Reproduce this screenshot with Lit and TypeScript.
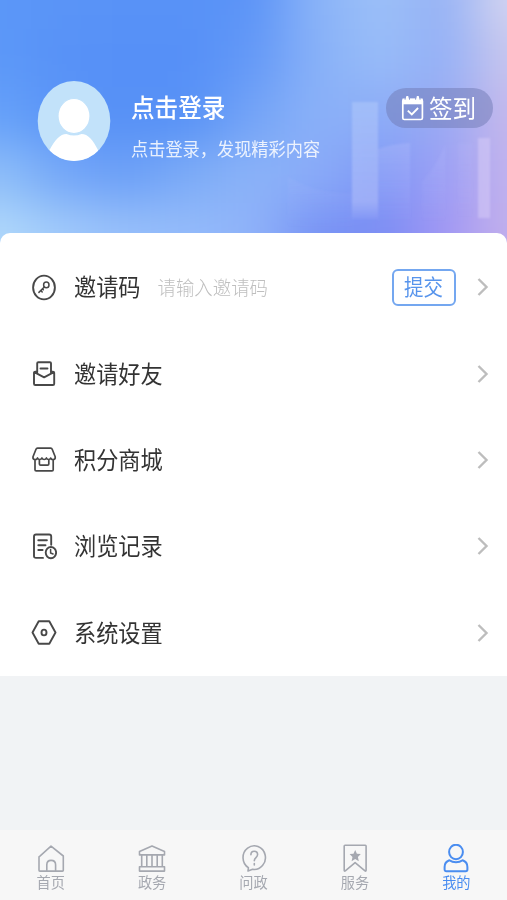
import { LitElement, html, svg, css } from "lit";
import { customElement, state } from "lit/decorators.js";

/* Mesh of colours for the header wash, row by row from top to bottom. */
const MESH = [
  ["#5b97f8", "#5a94f7", "#5892f7", "#5892f7", "#5c94f7", "#8ab3f8", "#9cc0f8", "#96b2f5", "#d3d4f0"],
  ["#5c98f8", "#5892f7", "#5690f7", "#5690f7", "#6499f7", "#88b1f8", "#98bcf8", "#94b0f6", "#c8c6ee"],
  ["#66a1f9", "#5a94f7", "#5690f6", "#5892f6", "#74a4f7", "#8ab1f8", "#8cacf7", "#99a9f3", "#c5b8ec"],
  ["#8ebef9", "#74a7f8", "#6b9ff7", "#7cabf7", "#8bb3f8", "#8aabf8", "#8099f6", "#9c9ff5", "#c2b2ed"],
  ["#b0d8fa", "#a0c9fa", "#97bffa", "#94bbfa", "#8fb2f9", "#7893f5", "#7b8df4", "#a096f4", "#c2b0ec"],
];

const ICONS = {
  key: svg`<ellipse cx="13" cy="13.5" rx="10.9" ry="11.9"/><ellipse cx="15.3" cy="10.9" rx="2.7" ry="2.8" stroke-width="1.5"/><path d="M13.3 13 7.9 18.4M9.9 16.4l1.3 1.5M11.5 14.8l.8 1" stroke-width="1.5"/>`,
  mail: svg`<path d="M6.2 12.600V3.300c0-.7.4-1.100 1.100-1.100h11.600c.7 0 1.100.4 1.100 1.100v9.300M9.500 8.500h7"/><path d="M6 11.600H4.300c-.8 0-1.300.4-1.300 1.200v10.900c0 .8.5 1.300 1.300 1.300h17.600c.8 0 1.300-.5 1.300-1.300V12.800c0-.8-.5-1.200-1.300-1.200h-1.700M3.300 12.200l9.800 5.100 9.800-5.100"/>`,
  shop: svg`<path d="M2 10.800 5 3.200c.3-.8.700-1.100 1.500-1.100h13.200c.8 0 1.200.3 1.500 1.100l3 7.600c.5 3.300-3.600 3.800-4.500 1.200-.7 2-3.500 2-4.300 0-.8 2-3.700 2-4.500 0-.8 2-3.600 2-4.400 0C5.600 14.600 1.500 14.100 2 10.800ZM4 14.800v8.900c0 .8.4 1.200 1.200 1.200h15.800c.8 0 1.200-.4 1.200-1.200v-8.900M8.400 14v4c0 .8.4 1.200 1.200 1.200h7c.8 0 1.200-.4 1.200-1.200v-4" stroke-width="1.700"/>`,
  record: svg`<path d="M12 24.9H5c-1.300 0-2-.7-2-2V3.500c0-1.300.7-2 2-2h13.200c1.300 0 2 .7 2 2v8.300M7.300 7.300h8.600M7.300 12.300h7.200M7.300 17h4.300"/><ellipse cx="19.900" cy="19.600" rx="5.200" ry="5.600"/><path d="M19.600 16.500v3.500l2.500 1" stroke-width="1.500"/>`,
  gear: svg`<path d="M7.700 2.300h10.600l6.200 11.200-6.200 11.200H7.700L1.500 13.500Z"/><ellipse cx="13" cy="13.500" rx="2.500" ry="2.900"/>`,
};

const TAB_ICONS = {
  home: svg`<path d="M3.200 11.800 14 2.200l12.300 9.800v14.300c0 .5-.3.8-.8.800H2.800c-.5 0-.8-.3-.8-.8V12.800ZM9.800 27v-6.200c0-2.800 1.700-4.400 4.300-4.400s4.500 1.600 4.500 4.400V27"/>`,
  hall: svg`<path d="M1.500 7.400 14 2l12.500 5.400v3.500h-25ZM3.700 11v11.800M8.800 11v11.800M14 11v11.800M19.200 11v11.800M24.300 11v11.800M1.500 22.800h25v4.300h-25Z"/>`,
  ask: svg`<path d="M8.400 23.700A11.200 11.800 0 1 1 12.600 25.300L8 27Z"/><path d="M10.900 10.800c0-2.100 1.300-3.500 3.300-3.500s3.400 1.400 3.400 3.300c0 3.100-3.300 3-3.300 6.200M14.300 19.500v1.400"/>`,
  service: svg`<path d="M4 1.200h20.300c.5 0 .8.300.8.800v24.300c0 .8-.6 1-1.100.5l-9.900-8.200-9.800 8.200c-.5.500-1.100.300-1.100-.5V2c0-.5.300-.8.800-.8Z"/><path class="solid" d="m14.200 5.900 1.700 3.900 3.900.3-2.900 2.900.9 4.300-3.600-2.300-3.600 2.300.9-4.300-2.900-2.900 3.900-.3Z"/>`,
  me: svg`<ellipse cx="14" cy="8" rx="6.900" ry="7.300"/><path d="M14 18.200c2.500 0 4.800-.7 6.600-2 3.200 1.100 4.800 3.500 4.800 6.700v2.600c0 1-.7 1.700-1.700 1.700H4.300c-1 0-1.700-.7-1.700-1.700v-2.600c0-3.200 1.600-5.600 4.800-6.700 1.800 1.300 4.100 2 6.600 2Z"/>`,
};

type IconName = keyof typeof ICONS;
type TabName = keyof typeof TAB_ICONS;

@customElement("profile-header")
export class ProfileHeader extends LitElement {
  static styles = css`
    :host {
      display: flex;
      position: relative;
      height: 245px;
      box-sizing: border-box;
      padding: 81px 14px 0 37px;
      overflow: hidden;
      color: #fff;
    }
    .wash {
      position: absolute;
      inset: 0;
      width: 507px;
      height: 245px;
    }
    .avatar {
      position: relative;
      flex: none;
      width: 74px;
      height: 81px;
    }
    .who {
      position: relative;
      flex: 1;
      padding: 9px 0 0 20px;
      white-space: nowrap;
    }
    .name,
    .hint,
    .label {
      transform: scaleY(1.08);
    }
    .name {
      font-size: 23.6px;
      line-height: 32px;
      font-weight: 500;
    }
    .hint {
      margin-top: 14px;
      font-size: 17.2px;
      line-height: 24px;
      opacity: 0.85;
    }
    .sign {
      position: relative;
      display: flex;
      align-items: center;
      box-sizing: border-box;
      width: 107px;
      height: 40px;
      margin-top: 7px;
      padding-left: 15px;
      gap: 5px;
      border-radius: 20px;
      background: rgba(112, 122, 180, 0.5);
      font-size: 23.6px;
      line-height: 32px;
      white-space: nowrap;
    }
    .label {
      margin-bottom: 3px;
    }
    .calendar {
      width: 23px;
      height: 25px;
    }
  `;

  render() {
    return html`
      <svg class="wash" viewBox="0 0 507 245">
        <defs>
          <filter id="soft" x="-20%" y="-40%" width="140%" height="180%" color-interpolation-filters="sRGB">
            <feGaussianBlur stdDeviation="26 22" />
          </filter>
          <filter id="edge"><feGaussianBlur stdDeviation="1" /></filter>
          <linearGradient id="bar" x1="0" y1="0" x2="0" y2="1">
            <stop offset="0" stop-color="#b4cbfb" stop-opacity=".5" />
            <stop offset=".85" stop-color="#b4c0fa" stop-opacity=".55" />
            <stop offset="1" stop-color="#b4c0fa" stop-opacity="0.1" />
          </linearGradient>
          <linearGradient id="fade" x1="0" y1="0" x2="0" y2="1">
            <stop offset="0" stop-color="#bcc2fb" stop-opacity=".33" />
            <stop offset="1" stop-color="#bcc2fb" stop-opacity="0" />
          </linearGradient>
        </defs>
        <g filter="url(#soft)">
          ${MESH.map((row, r) =>
            row.map((fill, c) => {
              const left = c === 0 ? -90 : c * 63.4 - 32;
              const right = c === 8 ? 600 : c * 63.4 + 33;
              const top = r === 0 ? -90 : r * 58 - 29;
              const bottom = r === 4 ? 340 : r * 58 + 30;
              return svg`<rect x=${left} y=${top} width=${right - left} height=${bottom - top} fill=${fill} />`;
            })
          )}
        </g>
        <g filter="url(#edge)">
          <rect x="352" y="102" width="26" height="117" fill="url(#bar)" />
          <path d="M378 149q14-5 32-6v82h-32Z" fill="url(#fade)" opacity=".8" />
          <path d="M422 182q14-15 23-36v76h-23Z" fill="url(#fade)" opacity=".5" />
          <rect x="458" y="143" width="14" height="75" fill="url(#fade)" opacity=".3" />
          <rect x="478" y="138" width="12" height="80" fill="#d8cdf8" opacity=".5" />
          <path d="M288 177q30 18 64 16v35h-64Z" fill="url(#fade)" opacity=".3" />
        </g>
      </svg>
      <svg class="avatar" viewBox="0 0 74 81">
        <defs>
          <clipPath id="disc"><ellipse cx="37" cy="40" rx="36.3" ry="40" /></clipPath>
        </defs>
        <g clip-path="url(#disc)">
          <rect width="74" height="81" fill="#c2e2fa" />
          <path d="M12.500 69C18 59 23 53 29.500 53q7.500 3.200 15 0C51 53 56 59 61 69v12H12.500Z" fill="#fff" />
          <ellipse cx="37" cy="35" rx="16" ry="17.500" fill="#fff" stroke="#c2e2fa" stroke-width="1.200" />
        </g>
      </svg>
      <div class="who">
        <div class="name">点击登录</div>
        <div class="hint">点击登录，发现精彩内容</div>
      </div>
      <div class="sign">
        <svg class="calendar" viewBox="0 0 23 25" fill="none" stroke="#fff">
          <rect x="1.800" y="3.500" width="19.600" height="20" rx="1.500" stroke-width="1.700" />
          <path d="M1.500 2.500h20.200v5.800H1.500Z" fill="#fff" stroke="none" />
          <path d="M6.300 1.200v2.500M16.800 1.200v2.500" stroke-width="2.600" stroke-linecap="round" />
          <path d="M4.100 1v2.700M19 1v2.700M8.500 1v2.700M14.600 1v2.700" stroke="#8b9bd4" stroke-width="1" />
          <path d="m6.800 14.600 4 3.900 6.300-6.500" stroke-width="1.800" />
        </svg>
        <span class="label">签到</span>
      </div>
    `;
  }
}

@customElement("menu-row")
export class MenuRow extends LitElement {
  static properties = { icon: {}, label: {} };
  declare icon: IconName;
  declare label: string;

  static styles = css`
    :host {
      display: flex;
      align-items: center;
      height: 86.4px;
      padding: 0 18px 0 31px;
      color: #333;
      white-space: nowrap;
    }
    .icon {
      flex: none;
      width: 26px;
      height: 27px;
      margin-right: 17px;
      fill: none;
      stroke: #484848;
      stroke-width: 1.9;
      stroke-linejoin: round;
      stroke-linecap: round;
    }
    .label {
      margin-bottom: 4px;
      font-size: 22.2px;
      line-height: 32px;
      transform: scaleY(1.08);
    }
    .extra {
      display: flex;
      flex: 1;
    }
    .arrow {
      flex: none;
      width: 12px;
      height: 20px;
      fill: none;
      stroke: #bdbdbd;
      stroke-width: 2.4;
    }
  `;

  render() {
    return html`
      <svg class="icon" viewBox="0 0 26 27">${ICONS[this.icon]}</svg>
      <span class="label">${this.label}</span>
      <div class="extra"><slot></slot></div>
      <svg class="arrow" viewBox="0 0 12 20"><path d="m1.500 2 8 8-8 8" /></svg>
    `;
  }
}

@customElement("app-root")
export class AppRoot extends LitElement {
  @state() private active: TabName = "me";

  private rows: { icon: IconName; label: string }[] = [
    { icon: "mail", label: "邀请好友" },
    { icon: "shop", label: "积分商城" },
    { icon: "record", label: "浏览记录" },
    { icon: "gear", label: "系统设置" },
  ];

  private tabs: { id: TabName; label: string }[] = [
    { id: "home", label: "首页" },
    { id: "hall", label: "政务" },
    { id: "ask", label: "问政" },
    { id: "service", label: "服务" },
    { id: "me", label: "我的" },
  ];

  static styles = css`
    :host {
      display: flex;
      flex-direction: column;
      height: 900px;
      overflow: hidden;
      background: #f1f3f5;
      font-family: "Noto Sans CJK SC", sans-serif;
    }
    .card {
      position: relative;
      height: 443px;
      box-sizing: border-box;
      margin-top: -12px;
      padding-top: 11px;
      border-radius: 10px 10px 0 0;
      background: #fff;
    }
    .invite {
      display: flex;
      flex: 1;
      align-items: center;
      justify-content: space-between;
      padding: 0 21px 0 17px;
    }
    .placeholder {
      margin-bottom: 3px;
      color: #bfbfbf;
      font-size: 18.4px;
      line-height: 26px;
      font-weight: 300;
      transform: scaleY(1.08);
    }
    .submit {
      display: flex;
      align-items: center;
      justify-content: center;
      box-sizing: border-box;
      width: 64px;
      height: 37px;
      border: 2px solid #74a7f0;
      border-radius: 6px;
      color: #5794ec;
      font-size: 19.5px;
      line-height: 26px;
    }
    .submit span {
      margin: 0 1px 3px 0;
      transform: scaleY(1.08);
    }
    .tabs {
      display: flex;
      height: 70px;
      margin-top: auto;
      background: #f7f7f7;
    }
    .tab {
      display: flex;
      flex: 1;
      flex-direction: column;
      align-items: center;
      padding-top: 14px;
      color: #a5a8b0;
      font-size: 14.2px;
      line-height: 20px;
    }
    .tab svg {
      width: 28px;
      height: 29px;
      fill: none;
      stroke: currentColor;
      stroke-width: 1.6;
      stroke-linejoin: round;
      stroke-linecap: round;
    }
    .tab .solid {
      fill: currentColor;
      stroke: none;
    }
    .tab.active {
      color: #4a8df0;
    }
    .tab.active svg {
      stroke-width: 2;
    }
    .tab span {
      margin-top: -1px;
      transform: scaleY(1.04);
    }
  `;

  render() {
    return html`
      <profile-header></profile-header>
      <div class="card">
        <menu-row icon="key" label="邀请码">
          <div class="invite">
            <span class="placeholder">请输入邀请码</span>
            <div class="submit"><span>提交</span></div>
          </div>
        </menu-row>
        ${this.rows.map((row) => html`<menu-row icon=${row.icon} label=${row.label}></menu-row>`)}
      </div>
      <div class="tabs">
        ${this.tabs.map(
          (tab) => html`
            <div class="tab ${tab.id === this.active ? "active" : ""}" @click=${() => (this.active = tab.id)}>
              <svg viewBox="0 0 28 29">${TAB_ICONS[tab.id]}</svg>
              <span>${tab.label}</span>
            </div>
          `
        )}
      </div>
    `;
  }
}
